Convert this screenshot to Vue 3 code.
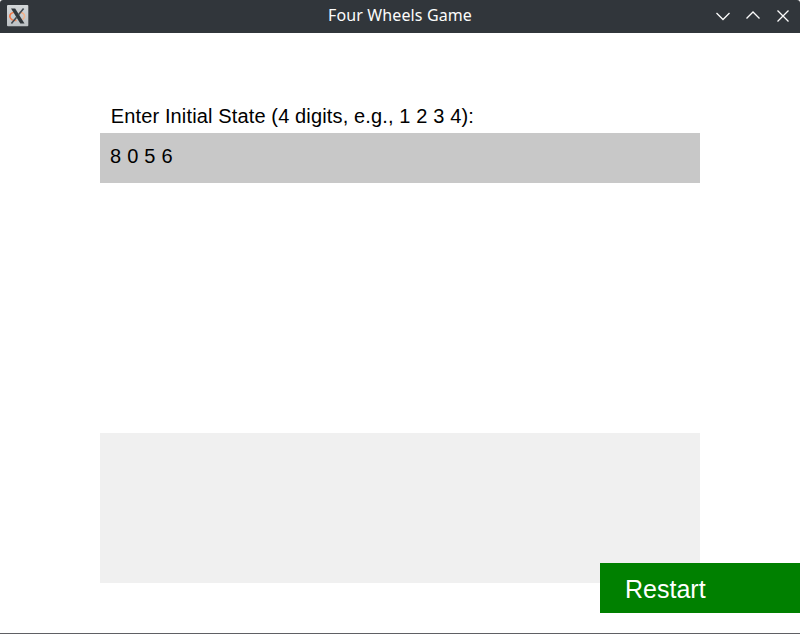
<script setup>
import { ref } from 'vue'

const title = ref('Four Wheels Game')
const prompt = ref('Enter Initial State (4 digits, e.g., 1 2 3 4):')
const state = ref('8 0 5 6')
</script>

<template>
  <div class="window">
    <header class="titlebar">
      <svg class="app-icon" viewBox="0 0 22 22" width="22" height="22">
        <defs>
          <linearGradient id="tile" x1="0" y1="0" x2="0" y2="1">
            <stop offset="0" stop-color="#d3d7d9" />
            <stop offset="1" stop-color="#bcc1c4" />
          </linearGradient>
          <linearGradient id="ring" x1="0" y1="0" x2="1" y2="0">
            <stop offset="0" stop-color="#f4703c" />
            <stop offset="1" stop-color="#f2b58e" />
          </linearGradient>
        </defs>
        <rect x="0" y="0" width="21.3" height="21.3" rx="1" fill="url(#tile)" />
        <path d="M8.2 7.2C4.5 7.4 2.8 9.4 2.8 11.3C2.8 14 6 15.9 9.6 15.5M12.5 7.3C15.5 7.6 17.6 9.2 17.6 11.3C17.6 12.7 16.8 13.8 15.6 14.6" fill="none" stroke="url(#ring)" stroke-width="1.6" />
        <path d="M4 3.5H8.2L17.5 18.5H13.3Z" fill="#30363b" />
        <path d="M16.6 3.5L11.5 9.8M9.6 12.3L4.4 18.5" fill="none" stroke="#414950" stroke-width="1.6" />
      </svg>
      <h1 class="title">{{ title }}</h1>
      <nav class="controls">
        <svg viewBox="0 0 16 16" width="16" height="16"><path d="M1.5 5L8 11.5L14.5 5" /></svg>
        <svg viewBox="0 0 16 16" width="16" height="16"><path d="M1.5 10.5L8 4L14.5 10.5" /></svg>
        <svg viewBox="0 0 16 16" width="16" height="16"><path d="M2.5 2.5L13.5 13.5M13.5 2.5L2.5 13.5" /></svg>
      </nav>
    </header>
    <main class="content">
      <label class="prompt">{{ prompt }}</label>
      <div class="field">{{ state }}</div>
      <div class="output"></div>
    </main>
    <button class="restart">Restart</button>
  </div>
</template>

<style>
body {
  margin: 0;
  background: #fff;
}
</style>

<style scoped>
.window {
  position: relative;
  box-sizing: border-box;
  width: 800px;
  height: 634px;
  display: flex;
  flex-direction: column;
  background: #fff;
  border-bottom: 1px solid #5f6064;
  overflow: hidden;
  font-family: "Liberation Sans", Arial, sans-serif;
}
.titlebar {
  box-sizing: border-box;
  height: 33px;
  flex: none;
  display: grid;
  grid-template-columns: 93px 1fr 93px;
  align-items: center;
  padding: 0 9px 2px 7px;
  background: #31363b;
  border-radius: 3px 3px 0 0;
}
.app-icon {
  display: block;
}
.title {
  margin: 0;
  padding: 0 0 1px 2px;
  text-align: center;
  font: 400 16px/30px "Noto Sans", sans-serif;
  letter-spacing: 0.12px;
  color: #fcfcfc;
  white-space: nowrap;
}
.controls {
  display: flex;
  justify-content: flex-end;
  gap: 14px;
}
.controls path {
  fill: none;
  stroke: #fcfcfc;
  stroke-width: 1.3;
}
.content {
  display: flex;
  flex-direction: column;
  padding: 67px 100px 0;
  font-size: 20px;
  color: #000;
}
.prompt {
  height: 33px;
  line-height: 33px;
  padding-left: 10.7px;
  letter-spacing: 0.14px;
  white-space: nowrap;
}
.field {
  box-sizing: border-box;
  height: 50px;
  padding-left: 10px;
  line-height: 47px;
  letter-spacing: 0.25px;
  background: #c8c8c8;
}
.output {
  height: 150px;
  margin-top: 250px;
  background: #f0f0f0;
}
.restart {
  position: absolute;
  right: 0;
  bottom: 20px;
  width: 200px;
  height: 50px;
  padding: 3px 0 0 25px;
  border: 0;
  background: #008000;
  color: #fff;
  font: 25px/47px "Liberation Sans", Arial, sans-serif;
  text-align: left;
}
</style>
